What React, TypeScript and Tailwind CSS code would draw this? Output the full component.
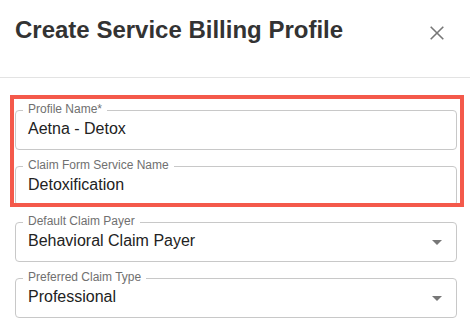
import React from "react";

function Field({ label, value, select }: { label: string; value: string; select?: boolean }) {
  return (
    <div className="relative h-[40px] rounded-[4px] border border-[#c8c8c8] flex items-center pl-[12px] pr-[14px] pb-[3px]">
      <span className="absolute left-[7px] top-[-8px] bg-white px-[5px] text-[12px] leading-none text-[#707070]">
        {label}
      </span>
      <span className="flex-1 text-[16px] leading-none text-[#222222]">{value}</span>
      {select && (
        <svg width="10" height="5" viewBox="0 0 10 5" className="mt-[3px]">
          <path d="M0 0 L10 0 L5 5 Z" fill="#777777" />
        </svg>
      )}
    </div>
  );
}

export default function App() {
  return (
    <div className="w-[470px] h-[322px] bg-white overflow-hidden" style={{ fontFamily: '"Liberation Sans", Arial, sans-serif' }}>
      <div className="h-[78px] border-b border-[#e3e3e3] flex items-start justify-between pl-[15px] pr-[26px]">
        <h1 className="pt-[18px] text-[24px] leading-none font-bold text-[#333333]">Create Service Billing Profile</h1>
        <svg width="14" height="14" viewBox="0 0 14 14" className="mt-[26px]">
          <path d="M0.7 0.7 L13.3 13.3 M13.3 0.7 L0.7 13.3" stroke="#777777" strokeWidth="1.6" />
        </svg>
      </div>
      <div className="relative pt-[32px] pl-[15px] pr-[13px] flex flex-col gap-[16px]">
        <Field label="Profile Name*" value="Aetna - Detox" />
        <Field label="Claim Form Service Name" value="Detoxification" />
        <Field label="Default Claim Payer" value="Behavioral Claim Payer" select />
        <Field label="Preferred Claim Type" value="Professional" select />
        <div className="absolute left-[10px] top-[17px] w-[454px] h-[112px] border-[4px] border-[#f4594b] pointer-events-none" />
      </div>
    </div>
  );
}
